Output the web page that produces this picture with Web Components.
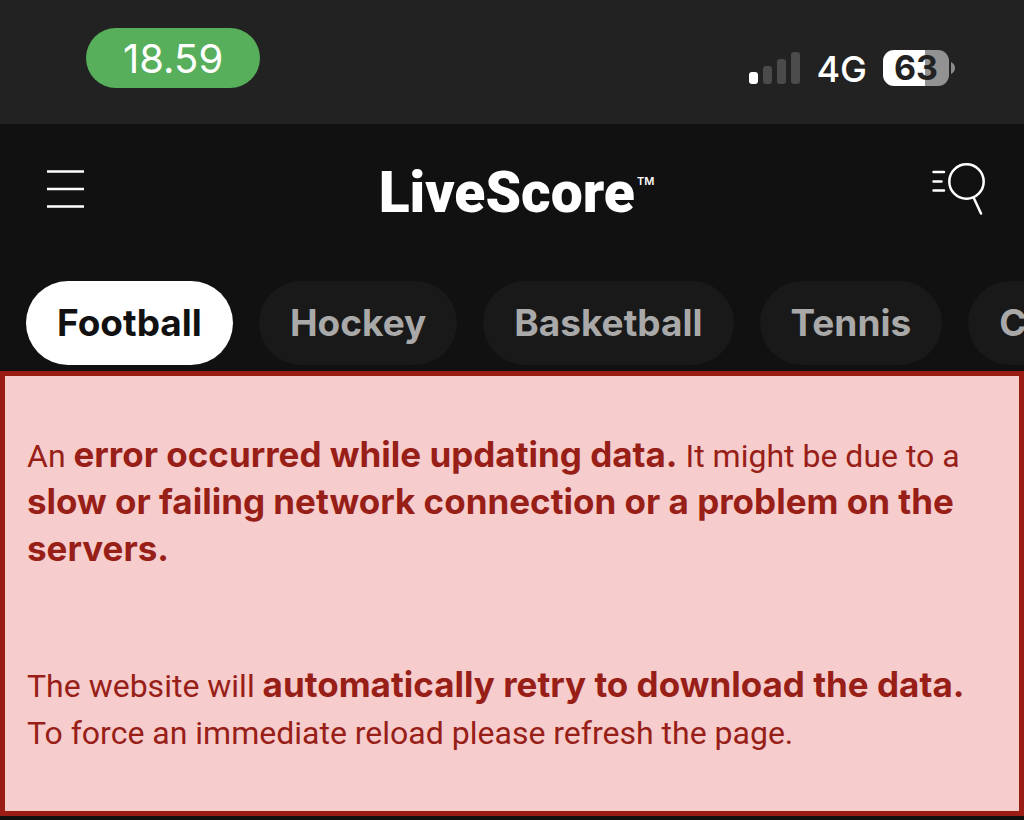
<!DOCTYPE html>
<html lang="en">
<head>
<meta charset="utf-8">
<meta name="viewport" content="width=device-width, initial-scale=1">
<title>LiveScore</title>
<style>
  body { margin: 0; background: #110e0e; font-family: Inter, "Liberation Sans", sans-serif; }
</style>
</head>
<body>
<live-app></live-app>
<script>
const define = (name, html) => {
  const template = document.createElement('template');
  template.innerHTML = html;
  customElements.define(name, class extends HTMLElement {
    constructor() {
      super();
      this.attachShadow({ mode: 'open' }).append(template.content.cloneNode(true));
    }
  });
};

define('status-bar', `
  <style>
    :host { display: flex; justify-content: space-between; align-items: flex-end; box-sizing: border-box; padding: 28px 69px 36px 86px; background: #222; color: #fff; }
    .time { padding: 2px 37px 0; border-radius: 30px; background: #57ae5b; font-size: 40px; line-height: 58px; }
    .signals { display: flex; align-items: center; gap: 16px; height: 40px; font-size: 36px; font-weight: 500; line-height: 40px; }
    .network { padding-top: 2px; }
    svg { display: block; }
    .battery { display: flex; align-items: center; gap: 2px; }
    .level { width: 66px; border-radius: 11px; background: linear-gradient(90deg, #fff 63%, #929292 63%); color: #222; text-align: center; font-size: 34px; font-weight: 700; line-height: 36px; }
  </style>
  <time class="time">18.59</time>
  <div class="signals">
    <svg width="51" height="32" viewBox="0 0 51 32" aria-hidden="true">
      <rect y="20" width="9" height="12" rx="3" fill="#fff"/>
      <g fill="#4b4b4b"><rect x="14" y="14" width="9" height="18" rx="3"/><rect x="28" y="7" width="9" height="25" rx="3"/><rect x="42" width="9" height="32" rx="3"/></g>
    </svg>
    <span class="network">4G</span>
    <div class="battery">
      <span class="level">63</span>
      <svg width="4" height="12" viewBox="0 0 4 12" aria-hidden="true"><path d="M0 0Q4 2 4 6T0 12Z" fill="#8a8a8a"/></svg>
    </div>
  </div>`);

define('app-header', `
  <style>
    :host { display: grid; grid-template-columns: 1fr auto 1fr; align-items: center; height: 130px; padding: 0 38px 0 47px; color: #fff; }
    button { display: block; padding: 0; border: 0; background: none; color: inherit; }
    button:last-child { justify-self: end; }
    svg { display: block; fill: none; stroke: currentColor; }
    a { display: flex; align-items: flex-start; gap: 2px; padding-top: 8px; color: inherit; text-decoration: none; font: 900 57px/64px Roboto, sans-serif; }
    sup { font: 600 11px/40px Inter, sans-serif; }
  </style>
  <button type="button" aria-label="Menu">
    <svg width="37" height="38" viewBox="0 0 37 38" stroke-width="2.6"><path d="M0 1.5H37M0 19H37M0 36.5H37"/></svg>
  </button>
  <a href="#">LiveScore<sup>TM</sup></a>
  <button type="button" aria-label="Search">
    <svg width="54" height="52" viewBox="0 0 54 52" stroke-width="2.5" stroke-linecap="round"><circle cx="34.5" cy="18.5" r="17.2"/><path d="M42 35.500L49 50.500M1.500 9H12M1.500 18.500H9.500M1.500 27.500H12"/></svg>
  </button>`);

define('sport-tab', `
  <style>
    :host { display: block; flex: none; }
    a { display: block; padding: 0 31px; border-radius: 42px; background: #191919; color: #a9a9a9; font-size: 37px; font-weight: 700; line-height: 84px; text-decoration: none; white-space: nowrap; }
    :host([selected]) a { background: #fff; color: #111; }
  </style>
  <a href="#"><slot></slot></a>`);

define('sport-tabs', `
  <style>
    :host { display: block; padding: 27px 0 6px; overflow: hidden; }
    nav { display: flex; gap: 26px; padding-left: 26px; }
  </style>
  <nav aria-label="Sports"><slot></slot></nav>`);

define('error-message', `
  <style>
    :host { display: flex; flex-direction: column; gap: 89px; border: 5px solid #9a1c14; padding: 57px 22px 54px; background: #f6cccc; color: #981e18; font-family: Roboto, sans-serif; font-size: 32px; line-height: 47px; }
  </style>
  <slot></slot>`);

define('live-app', `
  <style>
    :host { display: block; }
    .top { background: #111; }
    p { margin: 0; }
    b { font-family: Inter, sans-serif; font-size: 35px; font-weight: 700; line-height: 1; }
  </style>
  <status-bar></status-bar>
  <div class="top">
    <app-header></app-header>
    <sport-tabs>
      <sport-tab selected>Football</sport-tab>
      <sport-tab>Hockey</sport-tab>
      <sport-tab>Basketball</sport-tab>
      <sport-tab>Tennis</sport-tab>
      <sport-tab>Cricket</sport-tab>
    </sport-tabs>
  </div>
  <error-message role="alert">
    <p>An <b>error occurred while updating data.</b> It might be due to a <b>slow or failing network connection or a problem on the servers.</b></p>
    <p>The website will <b>automatically retry to download the data.</b><br>To force an immediate reload please refresh the page.</p>
  </error-message>`);
</script>
</body>
</html>
